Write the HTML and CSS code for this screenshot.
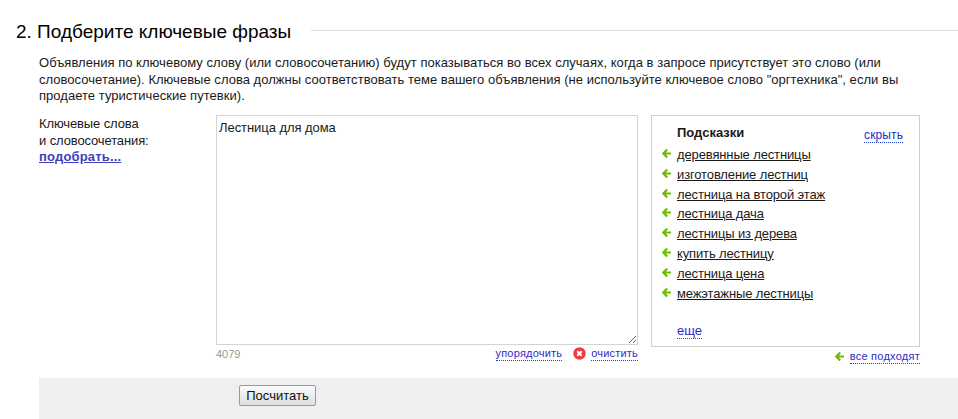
FILE: index.html
```html
<!DOCTYPE html>
<html lang="ru">
<head>
<meta charset="utf-8">
<title>Подберите ключевые фразы</title>
<link rel="stylesheet" href="styles.css">
</head>
<body>
<section class="step">
  <header class="step-head">
    <h2 class="step-title">2. Подберите ключевые фразы</h2>
    <span class="step-rule"></span>
  </header>
  <div class="step-body">
    <p class="intro">Объявления по ключевому слову (или словосочетанию) будут показываться во всех случаях, когда в запросе присутствует это слово (или словосочетание). Ключевые слова должны соответствовать теме вашего объявления (не используйте ключевое слово "оргтехника", если вы продаете туристические путевки).</p>
    <div class="form-row">
      <div class="label-col">
        <div>Ключевые слова<br>и словосочетания:</div>
        <a class="pick" href="#">подобрать...</a>
      </div>
      <div class="input-col">
        <textarea class="keywords">Лестница для дома</textarea>
        <div class="input-foot">
          <span class="count">4079</span>
          <span class="actions">
            <a class="dotted" href="#">упорядочить</a>
            <svg class="clear-icon" width="13" height="13" viewBox="0 0 13 13"><circle cx="6.5" cy="6.5" r="6.200" fill="#ef3b3f"/><path d="M4.300 4.300l4.400 4.400M8.700 4.300l-4.400 4.400" stroke="#fff" stroke-width="2"/></svg>
            <a class="dotted" href="#">очистить</a>
          </span>
        </div>
      </div>
      <div class="hints-col">
        <aside class="hints">
          <div class="hints-head">
            <b>Подсказки</b>
            <a class="dotted" href="#">скрыть</a>
          </div>
          <ul class="hint-list">
            <li><svg class="arrow" width="10" height="10" viewBox="0 0 10 10"><path d="M5.200 .6L1.400 4.500l3.800 3.900M2 4.500h7" fill="none" stroke="#6cbb00" stroke-width="2.200"/></svg><a href="#">деревянные лестницы</a></li>
            <li><svg class="arrow" width="10" height="10" viewBox="0 0 10 10"><path d="M5.200 .6L1.400 4.500l3.800 3.900M2 4.500h7" fill="none" stroke="#6cbb00" stroke-width="2.200"/></svg><a href="#">изготовление лестниц</a></li>
            <li><svg class="arrow" width="10" height="10" viewBox="0 0 10 10"><path d="M5.200 .6L1.400 4.500l3.800 3.900M2 4.500h7" fill="none" stroke="#6cbb00" stroke-width="2.200"/></svg><a href="#">лестница на второй этаж</a></li>
            <li><svg class="arrow" width="10" height="10" viewBox="0 0 10 10"><path d="M5.200 .6L1.400 4.500l3.800 3.900M2 4.500h7" fill="none" stroke="#6cbb00" stroke-width="2.200"/></svg><a href="#">лестница дача</a></li>
            <li><svg class="arrow" width="10" height="10" viewBox="0 0 10 10"><path d="M5.200 .6L1.400 4.500l3.800 3.900M2 4.500h7" fill="none" stroke="#6cbb00" stroke-width="2.200"/></svg><a href="#">лестницы из дерева</a></li>
            <li><svg class="arrow" width="10" height="10" viewBox="0 0 10 10"><path d="M5.200 .6L1.400 4.500l3.800 3.900M2 4.500h7" fill="none" stroke="#6cbb00" stroke-width="2.200"/></svg><a href="#">купить лестницу</a></li>
            <li><svg class="arrow" width="10" height="10" viewBox="0 0 10 10"><path d="M5.200 .6L1.400 4.500l3.800 3.900M2 4.500h7" fill="none" stroke="#6cbb00" stroke-width="2.200"/></svg><a href="#">лестница цена</a></li>
            <li><svg class="arrow" width="10" height="10" viewBox="0 0 10 10"><path d="M5.200 .6L1.400 4.500l3.800 3.900M2 4.500h7" fill="none" stroke="#6cbb00" stroke-width="2.200"/></svg><a href="#">межэтажные лестницы</a></li>
          </ul>
          <a class="dotted more" href="#">еще</a>
        </aside>
        <div class="all-fit">
          <svg class="arrow" width="10" height="10" viewBox="0 0 10 10"><path d="M5.200 .6L1.400 4.500l3.800 3.900M2 4.500h7" fill="none" stroke="#6cbb00" stroke-width="2.200"/></svg>
          <a class="dotted" href="#">все подходят</a>
        </div>
      </div>
    </div>
  </div>
</section>
<div class="footer-bar">
  <button class="calc" type="button">Посчитать</button>
</div>
</body>
</html>
```
FILE: styles.css
```css
html, body {
  margin: 0;
  padding: 0;
  background: #fff;
}
body {
  width: 958px;
  height: 419px;
  overflow: hidden;
  font-family: "Liberation Sans", Arial, sans-serif;
  font-size: 13px;
  line-height: 16px;
  color: #1a1a1a;
}
a {
  color: #2b2bc4;
}
.step {
  height: 378px;
}
.step-head {
  display: flex;
  align-items: center;
  padding: 21px 0 0 16px;
  height: 22px;
}
.step-title {
  margin: 0;
  font-size: 19px;
  font-weight: normal;
  line-height: 22px;
  color: #000;
}
.step-rule {
  flex: 1;
  height: 1px;
  margin: -3px 0 0 20px;
  background: #dcdcdc;
}
.step-body {
  padding: 12px 0 0 39px;
}
.intro {
  margin: 0;
  width: 885px;
  line-height: 16.500px;
  letter-spacing: 0.030px;
}
.form-row {
  display: flex;
  margin-top: 10.500px;
}
.label-col {
  width: 177px;
  padding-top: 1px;
  line-height: 16.500px;
  letter-spacing: -0.120px;
}
.pick {
  font-weight: bold;
  letter-spacing: 0.170px;
  color: #3f3fc0;
}
.input-col {
  width: 422px;
}
.keywords {
  display: block;
  box-sizing: border-box;
  width: 422px;
  height: 230px;
  margin: 0;
  padding: 4px 2px;
  border: 1px solid #d4d4d4;
  font-family: "Liberation Sans", Arial, sans-serif;
  font-size: 13px;
  line-height: 15px;
  letter-spacing: -0.060px;
  color: #1a1a1a;
  outline: none;
}
.input-foot {
  display: flex;
  justify-content: space-between;
  font-size: 11px;
  line-height: 14px;
  margin-top: 2px;
}
.count {
  color: #999;
}
.actions {
  display: flex;
  align-items: flex-start;
}
.clear-icon {
  margin: 0 5px 0 11px;
}
.dotted {
  text-decoration: none;
  border-bottom: 1px dotted #2040d0;
}
.input-foot .dotted {
  line-height: 13px;
  letter-spacing: 0.200px;
}
.hints-col {
  width: 269px;
  margin-left: 13px;
}
.hints {
  box-sizing: border-box;
  height: 232px;
  border: 1px solid #cfcfcf;
  padding: 9px 16px 0 25px;
}
.hints-head {
  display: flex;
  justify-content: space-between;
  align-items: flex-start;
  height: 21px;
  color: #1a1a1a;
}
.hints-head .dotted {
  font-size: 12px;
  line-height: 14px;
  margin-top: 3px;
  letter-spacing: 0.100px;
}
.hint-list {
  list-style: none;
  margin: 0;
  padding: 0;
  letter-spacing: -0.130px;
}
.hint-list li {
  position: relative;
  height: 19.840px;
  line-height: 18px;
}
.hint-list a {
  color: #1a1a1a;
}
.hint-list .arrow {
  position: absolute;
  left: -15px;
  top: 3px;
}
.more {
  display: inline-block;
  margin-top: 19px;
  line-height: 14px;
}
.all-fit {
  display: flex;
  justify-content: flex-end;
  align-items: center;
  font-size: 11px;
  line-height: 13px;
  letter-spacing: 0.250px;
  margin-top: 3px;
}
.all-fit .arrow {
  margin-right: 5px;
}
.footer-bar {
  margin-left: 39px;
  height: 41px;
  padding: 7px 0 0 200px;
  box-sizing: border-box;
  background: #eeeff1;
}
.calc {
  display: block;
  box-sizing: border-box;
  width: 77px;
  height: 21px;
  padding: 0;
  border: 1px solid #999;
  border-radius: 2px;
  background: linear-gradient(#fbfbfb, #dedede);
  font-family: "Liberation Sans", Arial, sans-serif;
  font-size: 13px;
  color: #111;
}
```
